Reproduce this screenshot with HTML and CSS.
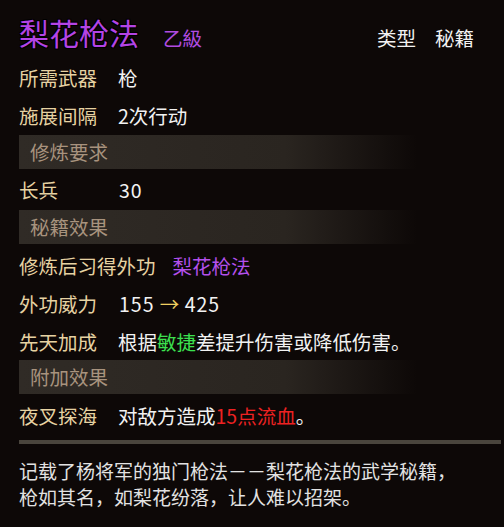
FILE: index.html
```
<html>
<head>
<meta charset="utf-8">
<link rel="stylesheet" href="styles.css">
<title>梨花枪法</title>
</head>
<body>
<div class="tip">
    <div class="head">
        <span class="name">梨花枪法</span>
        <span class="grade">乙級</span>
        <span class="kind"><span>类型</span><span>秘籍</span></span>
    </div>
    <div class="row"><span class="label">所需武器</span><span class="value">枪</span></div>
    <div class="row"><span class="label">施展间隔</span><span class="value">2次行动</span></div>

    <div class="bar first">修炼要求</div>
    <div class="row tall"><span class="label">长兵</span><span class="value num">30</span></div>

    <div class="bar">秘籍效果</div>
    <div class="group">
        <div class="row"><span class="label">修炼后习得外功</span><span class="value purple">梨花枪法</span></div>
        <div class="row"><span class="label">外功威力</span><span class="value num">155 <span class="arrow">→</span> 425</span></div>
        <div class="row"><span class="label">先天加成</span><span class="value">根据<span class="green">敏捷</span>差提升伤害或降低伤害。</span></div>
    </div>

    <div class="bar">附加效果</div>
    <div class="row extra"><span class="label">夜叉探海</span><span class="value">对敌方造成<span class="red">15点流血</span>。</span></div>

    <div class="line"></div>
    <div class="desc">
        记载了杨将军的独门枪法－－梨花枪法的武学秘籍，<br>
        枪如其名，如梨花纷落，让人难以招架。
    </div>
</div>
</body>
</html>
```

FILE: styles.css
```
body {
    margin: 0;
    background-color: #0d0807;
    font-family: "Noto Sans CJK SC", "Noto Sans", sans-serif;
    width: 504px;
    height: 527px;
    overflow: hidden;
}
.tip {
    padding-left: 19px;
}
.head {
    height: 58px;
    display: flex;
    align-items: flex-start;
    padding-top: 11px;
    box-sizing: border-box;
}
.name {
    font-size: 30px;
    line-height: 42px;
    color: #b444e6;
    text-shadow: 1px 1px 0 #000, -1px -1px 0 #000, 1px -1px 0 #000, -1px 1px 0 #000;
}
.grade {
    font-size: 19.5px;
    line-height: 20px;
    margin-top: 17px;
    margin-left: 24px;
    color: #b04ce0;
}
.kind {
    display: flex;
    gap: 19px;
    margin-left: auto;
    margin-right: 30px;
    font-size: 19.5px;
    line-height: 20px;
    margin-top: 17px;
    color: #f2f2f2;
}
.row {
    display: flex;
    align-items: center;
    height: 38px;
    font-size: 19.5px;
}
.row.tall {
    height: 41px;
}
.row.extra {
    height: 42px;
}
.group {
    padding-top: 2px;
}
.label {
    min-width: 82px;
    margin-right: 17px;
    color: #e6d2a2;
}
.value {
    color: #f2f2f2;
}
.num {
    padding-left: 1px;
    letter-spacing: 1px;
}
.arrow {
    color: #f0d060;
    letter-spacing: 0;
}
.purple {
    color: #b450ec;
}
.green {
    color: #3ce050;
}
.red {
    color: #ee2222;
}
.bar {
    height: 34px;
    line-height: 34px;
    padding-left: 11px;
    font-size: 19.5px;
    color: #a8937e;
    background: linear-gradient(to right, #302b26 0%, #2a2520 55%, #0d0807 82%);
}
.bar.first {
    margin-top: 1px;
}
.line {
    height: 4px;
    margin-top: 4px;
    margin-right: 3px;
    background-color: #4a453d;
}
.desc {
    margin-top: 14px;
    font-size: 19px;
    line-height: 26px;
    color: #e2e2e2;
}
```
